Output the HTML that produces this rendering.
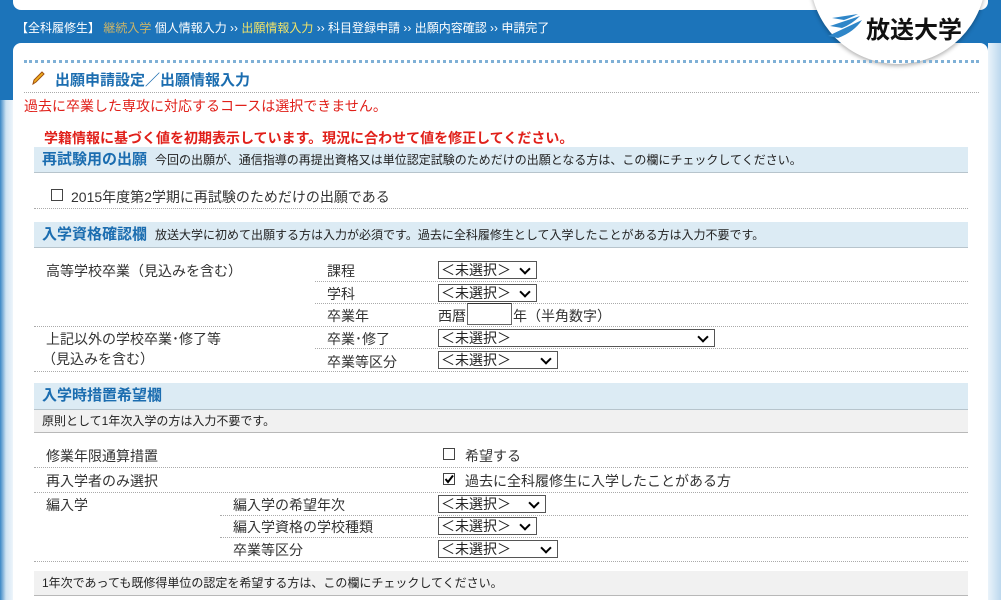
<!DOCTYPE html>
<html style="height:600px;overflow:hidden"><head><meta charset="utf-8"><style>
*{margin:0;padding:0;box-sizing:border-box}
body{width:1001px;height:600px;overflow:hidden;position:relative;font-family:"Liberation Sans","Noto Sans CJK JP",sans-serif;font-size:13px;color:#333;background:linear-gradient(to right,#3a86c4 0,#cfe3f2 6px,#eef5fb 13px,#fff 13px)}
.a{position:absolute;white-space:nowrap}
.hdr{position:absolute;left:0;top:0;width:1001px;height:100px;background:#1c74ba}
.top{position:absolute;left:13px;top:-8px;width:975px;height:18px;background:#fff;border-radius:0 0 8px 8px}
.panel{position:absolute;left:13px;top:43px;width:975px;height:557px;background:#fff;border-radius:8px 8px 0 0}
.rside{position:absolute;left:988px;top:43px;width:13px;height:557px;background:linear-gradient(to right,#eaf3fa,#bcd8ee)}
.circle{position:absolute;left:810px;top:-112px;width:176px;height:176px;border-radius:50%;background:#fff;box-shadow:0 2px 4px rgba(0,0,0,.3)}
.sec{position:absolute;left:34px;width:934px;background:#dcebf4;border-bottom:1px solid #b7c4cc;color:#1b6db0;font-weight:bold;font-size:15px;padding-left:8px}
.sec span{font-weight:normal;color:#222;font-size:12px;margin-left:8px}
.gray{position:absolute;left:34px;width:934px;background:#f1f1f1;border-bottom:1px solid #b8b8b8;font-size:12px;color:#222;padding-left:8px}
.dl{position:absolute;height:0;border-top:1px dotted #aaa}
.sel{position:absolute;height:18px;border:1px solid #555;background:#fff;font-size:14px;padding-left:2px;line-height:16px;color:#222;overflow:hidden;white-space:nowrap}
.sel:after{content:"";position:absolute;right:7px;top:3px;width:6px;height:6px;border-right:2px solid #000;border-bottom:2px solid #000;transform:rotate(45deg)}
.cb{position:absolute;width:12px;height:12px;border:1px solid #444;background:#fff}
</style></head><body>
<div class="hdr"></div>
<div class="top"></div>
<div class="a" style="left:16px;top:19px;color:#fff;font-size:12px">【全科履修生】 <span style="color:#c8b36a">継続入学</span> 個人情報入力 ›› <span style="color:#f0e36a">出願情報入力</span> ›› 科目登録申請 ›› 出願内容確認 ›› 申請完了</div>
<div class="panel"></div>
<div class="rside"></div>
<div class="circle"></div>
<svg class="a" style="left:828px;top:12px" width="36" height="28" viewBox="0 0 36 28"><path d="M4 6 L30 2 Q22 6 16 8 Z M2 14 L32 4 Q24 12 14 16 Z M0 24 L34 8 Q26 20 10 26 Z" fill="#2f86c8"/></svg>
<div class="a" style="left:866px;top:10px;font-size:24px;font-weight:bold;color:#111">放送大学</div>
<div class="dl" style="left:24px;top:60px;width:955px;border-top:3px dotted #7fb0d6"></div>
<svg class="a" style="left:30px;top:70px" width="16" height="16"><path d="M3 14 L4 10 L12 2 L14 4 L6 12 Z" fill="#f0b020" stroke="#a05010"/></svg>
<div class="a" style="left:55px;top:69px;font-size:15px;font-weight:bold;color:#1b6db0">出願申請設定／出願情報入力</div>
<div class="dl" style="left:24px;top:92px;width:955px"></div>
<div class="a" style="left:24px;top:96px;color:#e0201a;font-size:14px">過去に卒業した専攻に対応するコースは選択できません。</div>
<div class="a" style="left:44px;top:128px;color:#e0201a;font-size:14px;font-weight:bold">学籍情報に基づく値を初期表示しています。現況に合わせて値を修正してください。</div>

<div class="sec" style="top:147px;height:26px;line-height:25px">再試験用の出願<span>今回の出願が、通信指導の再提出資格又は単位認定試験のためだけの出願となる方は、この欄にチェックしてください。</span></div>
<div class="cb" style="left:51px;top:189px"></div>
<div class="a" style="left:71px;top:187px;font-size:14px">2015年度第2学期に再試験のためだけの出願である</div>
<div class="dl" style="left:34px;top:208px;width:934px"></div>

<div class="sec" style="top:222px;height:26px;line-height:25px">入学資格確認欄<span>放送大学に初めて出願する方は入力が必須です。過去に全科履修生として入学したことがある方は入力不要です。</span></div>
<div class="a" style="left:46px;top:261px;font-size:14px">高等学校卒業（見込みを含む）</div>
<div class="a" style="left:327px;top:261px;font-size:14px">課程</div>
<div class="sel" style="left:438px;top:261px;width:99px">＜未選択＞</div>
<div class="dl" style="left:315px;top:281px;width:653px"></div>
<div class="a" style="left:327px;top:284px;font-size:14px">学科</div>
<div class="sel" style="left:438px;top:284px;width:99px">＜未選択＞</div>
<div class="dl" style="left:315px;top:303px;width:653px"></div>
<div class="a" style="left:327px;top:306px;font-size:14px">卒業年</div>
<div class="a" style="left:438px;top:306px;font-size:14px">西暦</div>
<div class="a" style="left:467px;top:303px;width:45px;height:22px;border:1px solid #666;border-top-color:#333;background:#fff"></div>
<div class="a" style="left:513px;top:306px;font-size:14px">年（半角数字）</div>
<div class="dl" style="left:34px;top:326px;width:934px"></div>
<div class="a" style="left:46px;top:329px;font-size:14px">上記以外の学校卒業･修了等</div>
<div class="a" style="left:42px;top:349px;font-size:14px">（見込みを含む）</div>
<div class="a" style="left:327px;top:329px;font-size:14px">卒業･修了</div>
<div class="sel" style="left:438px;top:329px;width:277px">＜未選択＞</div>
<div class="dl" style="left:315px;top:348px;width:653px"></div>
<div class="a" style="left:327px;top:352px;font-size:14px">卒業等区分</div>
<div class="sel" style="left:438px;top:351px;width:120px">＜未選択＞</div>
<div class="dl" style="left:34px;top:371px;width:934px"></div>

<div class="sec" style="top:383px;height:27px;line-height:26px">入学時措置希望欄</div>
<div class="gray" style="top:410px;height:23px;line-height:22px">原則として1年次入学の方は入力不要です。</div>
<div class="a" style="left:46px;top:446px;font-size:14px">修業年限通算措置</div>
<div class="cb" style="left:443px;top:448px"></div>
<div class="a" style="left:465px;top:446px;font-size:14px">希望する</div>
<div class="dl" style="left:34px;top:467px;width:934px"></div>
<div class="a" style="left:46px;top:471px;font-size:14px">再入学者のみ選択</div>
<div class="cb" style="left:443px;top:473px"></div>
<svg class="a" style="left:443px;top:473px" width="12" height="12"><path d="M2.5 6 L5 9 L10 2.5" fill="none" stroke="#000" stroke-width="2"/></svg>
<div class="a" style="left:465px;top:471px;font-size:14px">過去に全科履修生に入学したことがある方</div>
<div class="dl" style="left:34px;top:492px;width:934px"></div>
<div class="a" style="left:46px;top:495px;font-size:14px">編入学</div>
<div class="a" style="left:233px;top:495px;font-size:14px">編入学の希望年次</div>
<div class="sel" style="left:438px;top:495px;width:108px">＜未選択＞</div>
<div class="dl" style="left:220px;top:515px;width:748px"></div>
<div class="a" style="left:233px;top:517px;font-size:14px">編入学資格の学校種類</div>
<div class="sel" style="left:438px;top:517px;width:99px">＜未選択＞</div>
<div class="dl" style="left:220px;top:537px;width:748px"></div>
<div class="a" style="left:233px;top:540px;font-size:14px">卒業等区分</div>
<div class="sel" style="left:438px;top:540px;width:120px">＜未選択＞</div>
<div class="dl" style="left:34px;top:561px;width:934px"></div>
<div class="gray" style="top:571px;height:25px;line-height:24px">1年次であっても既修得単位の認定を希望する方は、この欄にチェックしてください。</div>
</body></html>
